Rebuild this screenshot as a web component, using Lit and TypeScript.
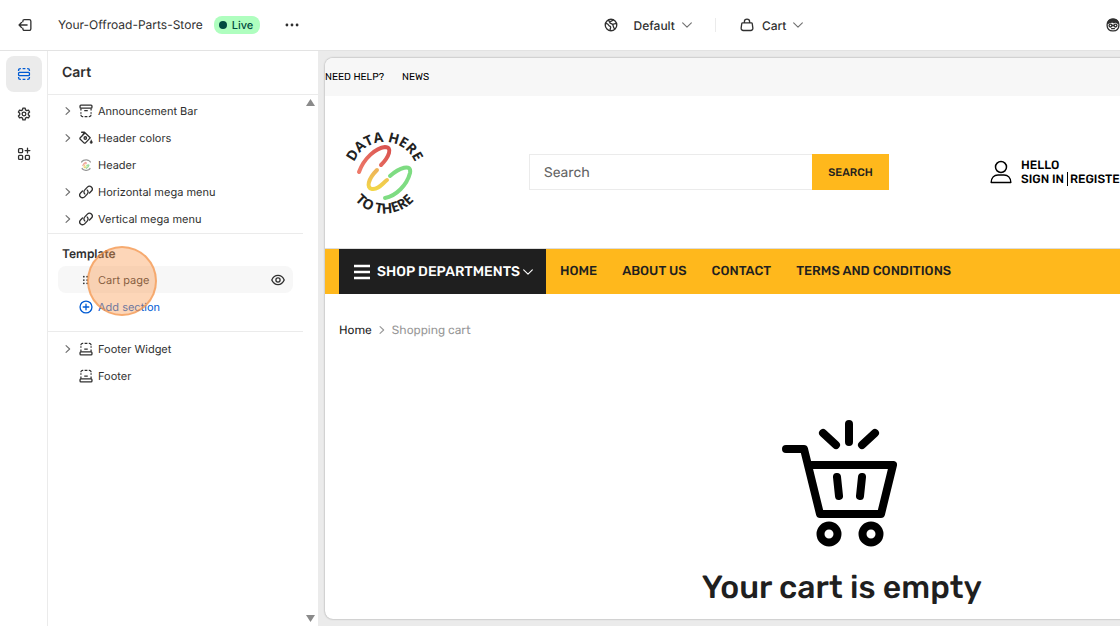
import { LitElement, html, svg, css } from "lit";
import { customElement } from "lit/decorators.js";
import { classMap } from "lit/directives/class-map.js";

const icon = (body: unknown, cls = "icon") =>
  html`<svg class=${cls} viewBox="0 0 16 16" aria-hidden="true">${body}</svg>`;

const icons = {
  exit: svg`<path d="M5.500 4.400V3.600a1.800 1.800 0 0 1 1.800-1.800h5.600a1.800 1.800 0 0 1 1.800 1.800v8.800a1.800 1.800 0 0 1-1.800 1.800H7.300a1.800 1.800 0 0 1-1.800-1.800v-.8M10.400 8H1.200M4 5.200 1.200 8 4 10.800"/>`,
  sections: svg`<g stroke-linecap="butt"><path d="M1.800 4.600V3.800A2 2 0 0 1 3.800 1.800h.6M6.400 1.800h3.200M11.600 1.800h.6a2 2 0 0 1 2 2v.8M1.800 11.400v.8a2 2 0 0 0 2 2h.6M6.400 14.200h3.200M11.600 14.200h.6a2 2 0 0 0 2-2v-.8"/></g><rect x="1.800" y="6.200" width="12.400" height="3.600" rx="1"/>`,
  gear: svg`<path d="M6.700 1.300h2.600l.4 2 1.400.8 2-.6 1.300 2.200-1.500 1.500v1.600l1.500 1.500-1.300 2.200-2-.6-1.400.8-.4 2H6.700l-.4-2-1.400-.8-2 .6-1.300-2.200 1.500-1.500V7.200L1.600 5.700l1.300-2.200 2 .6 1.400-.8z"/><circle cx="8" cy="8" r="2.100"/>`,
  apps: svg`<rect x="1.800" y="1.800" width="4.600" height="4.600" rx="1"/><rect x="1.800" y="9.600" width="4.600" height="4.600" rx="1"/><rect x="9.600" y="9.600" width="4.600" height="4.600" rx="1"/><path d="M12 1.400v5.400M9.300 4.100h5.400"/>`,
  header: svg`<rect x="1.200" y="1.200" width="13.600" height="3.600" rx="1"/><path stroke-linecap="butt" stroke-width="1.400" d="M2.200 5v2.300M13.800 5v2.300M6 7.600h4M2.200 9.300v1.900M13.800 9.300v1.900M2.200 12.400a2 2 0 0 0 2 2h.6M13.800 12.400a2 2 0 0 1-2 2h-.6M6.400 14.400h3.200"/>`,
  paint: svg`<path d="M3 1.400h3.200l6.600 6.400-5.400 5.800a1.200 1.200 0 0 1-1.700 0L1.400 9.400a1.200 1.200 0 0 1 0-1.700L6.800 2.200M6.200 1.400 3.900 5.300"/><circle cx="7.200" cy="8" r="1.400"/><path d="M14 10.400c.8 1.300 1.300 1.900 1.300 2.600a1.300 1.300 0 0 1-2.600 0c0-.7.500-1.300 1.300-2.600z" fill="currentColor" stroke-width=".5"/>`,
  link: svg`<path d="M6.600 10.200A3.200 3.200 0 0 1 6.600 5.600L9.600 2.400a3.200 3.200 0 0 1 4.600 4.500L12 9.200M9.400 5.800a3.200 3.200 0 0 1 0 4.600l-3 3.200a3.200 3.200 0 0 1-4.600-4.500L4 6.800"/>`,
  footer: svg`<path stroke-linecap="butt" stroke-width="1.400" d="M4.800 1.600h-.6a2 2 0 0 0-2 2M6.400 1.600h3.200M11.200 1.600h.6a2 2 0 0 1 2 2M2.200 4.800v1.900M13.800 4.800v1.900M6 8.200h4M2.200 8.600v2.400M13.800 8.600v2.400"/><rect x="1.200" y="11.200" width="13.600" height="3.600" rx="1"/>`,
  brand: svg`<path d="M3 4.600C5 1.400 11 1.400 13 4.600" stroke="#999" stroke-dasharray="1.500 .7"/><path d="M3.600 12c2 2.800 7 2.800 9 0" stroke="#999" stroke-dasharray="1.500 .7"/><path d="M4.400 8.600C6 5 9 4 8 6.600" stroke="#f0a8a0"/><path d="M6.600 8c-2 3 0 3.600 1.400 2" stroke="#ecd67c"/><path d="M9 8.600c3-2 3.200.4-.6 3.200" stroke="#9bdca0"/>`,
  plus: svg`<circle cx="8" cy="8" r="6.800"/><path d="M8 4.800v6.400M4.800 8h6.400"/>`,
  grip: svg`<g fill="currentColor" stroke="none"><circle cx="5.500" cy="4.200" r="1"/><circle cx="5.500" cy="8" r="1"/><circle cx="5.500" cy="11.800" r="1"/><circle cx="9.300" cy="4.200" r="1"/><circle cx="9.300" cy="8" r="1"/><circle cx="9.300" cy="11.800" r="1"/></g>`,
  eye: svg`<path d="M.9 8C2.300 4.800 4.900 2.800 8 2.800S13.700 4.800 15.100 8C13.700 11.200 11.100 13.200 8 13.200S2.300 11.200.9 8z"/><circle cx="8" cy="8" r="2.400"/>`,
  dots: svg`<g fill="currentColor" stroke="none"><circle cx="2.200" cy="8" r="1.600"/><circle cx="8" cy="8" r="1.600"/><circle cx="13.800" cy="8" r="1.600"/></g>`,
  globe: svg`<circle cx="8" cy="8" r="6.600"/><path d="M1.800 6.200c2.400.2 3.200 1 3.800 2.400.4 1 1.800.6 2 1.800.2 1-.8 1.600-.6 3.800M10.600 2.200C9.400 4 6.800 3.400 6.600 5.200c-.1 1.400 2 1 3 1.900 1.300 1.100.4 2.500 2.400 5.300M5.200 2.400l1.400 2.800M14.200 6.800c-1.600-.8-3 0-4.200.6"/>`,
  bag: svg`<path d="M5 5.600V4.300a3 3 0 0 1 6 0v1.300M3 5.600h10a1 1 0 0 1 1 .8l.7 5.200a2.400 2.400 0 0 1-2.400 2.700H3.700a2.400 2.400 0 0 1-2.400-2.700L2 6.400a1 1 0 0 1 1-.8z"/>`,
  right: svg`<path d="m5.400 3.400 4.800 4.600-4.800 4.600"/>`,
  down: svg`<path d="m2.200 5.200 5.800 5.600 5.800-5.600"/>`,
  face: svg`<path d="M2 6.200C2.400 3 4.800 1.400 8 1.400s5.600 1.600 6 4.800L10.600 4.600 9 5.400 7.200 4.400z" fill="currentColor"/><rect x="1.300" y="1.400" width="13.400" height="13.400" rx="6"/><circle cx="5.200" cy="8.600" r="1.700"/><circle cx="10.800" cy="8.600" r="1.700"/><path d="M7 8.600h2M6.400 12.200h3.200"/>`,
};

type Row = { label: string; glyph: unknown; open?: boolean };

const headerRows: Row[] = [
  { label: "Announcement Bar", glyph: icons.header, open: true },
  { label: "Header colors", glyph: icons.paint, open: true },
  { label: "Header", glyph: icons.brand },
  { label: "Horizontal mega menu", glyph: icons.link, open: true },
  { label: "Vertical mega menu", glyph: icons.link, open: true },
];

const footerRows: Row[] = [
  { label: "Footer Widget", glyph: icons.footer, open: true },
  { label: "Footer", glyph: icons.footer },
];

const shared = css`
  * {
    box-sizing: border-box;
  }
  button,
  input {
    font: inherit;
    color: inherit;
    text-rendering: inherit;
    border: 0;
    padding: 0;
    background: none;
    border-radius: 0;
  }
  a {
    color: inherit;
    text-decoration: none;
  }
  h1,
  h2,
  p,
  ul {
    margin: 0;
    padding: 0;
    list-style: none;
  }
  svg {
    display: block;
    flex: none;
    fill: none;
    stroke: currentColor;
    stroke-width: 1.5;
    stroke-linecap: round;
    stroke-linejoin: round;
  }
  .icon {
    width: 14px;
    height: 14px;
  }
  .small {
    width: 12px;
    height: 12px;
    color: #707070;
  }
`;

@customElement("editor-topbar")
class EditorTopbar extends LitElement {
  static styles = [
    shared,
    css`
      :host {
        display: grid;
        grid-template-columns: 318px 1fr auto;
        align-items: center;
        height: 51px;
        background: #fff;
        border-bottom: 1px solid #e3e3e3;
        font-size: 12px;
      }
      .left {
        display: flex;
        align-items: center;
        padding-left: 18px;
      }
      .store {
        margin: 0 11px 2px 26px;
      }
      .live {
        display: flex;
        align-items: center;
        gap: 5px;
        height: 18px;
        padding: 0 7px 0 5px;
        margin-right: 25px;
        border-radius: 8px;
        background: #affebf;
        color: #014b40;
        font-size: 11px;
        font-weight: 500;
      }
      .dot {
        width: 8px;
        height: 8px;
        border-radius: 50%;
        background: #014b40;
      }
      .center {
        display: flex;
        align-items: center;
        justify-content: center;
        padding-right: 16px;
        font-weight: 500;
      }
      .pick {
        display: flex;
        align-items: center;
        gap: 6px;
      }
      .globe {
        margin-right: 16px;
      }
      .rule {
        width: 1px;
        height: 14px;
        margin: 0 24px 0 22px;
        background: #ebebeb;
      }
      .pick .icon {
        margin-right: 2px;
      }
      .right {
        width: 14px;
      }
    `,
  ];
  render() {
    return html`
      <div class="left">
        <button aria-label="Exit">${icon(icons.exit)}</button>
        <span class="store">Your-Offroad-Parts-Store</span>
        <span class="live"><span class="dot"></span>Live</span>
        <button aria-label="More actions">${icon(icons.dots)}</button>
      </div>
      <div class="center">
        <button class="globe" aria-label="Market">${icon(icons.globe)}</button>
        <button class="pick">Default ${icon(icons.down, "small")}</button>
        <span class="rule"></span>
        <button class="pick">
          ${icon(icons.bag)}Cart ${icon(icons.down, "small")}
        </button>
      </div>
      <button class="right" aria-label="Inspector">${icon(icons.face)}</button>
    `;
  }
}

@customElement("editor-rail")
class EditorRail extends LitElement {
  static styles = [
    shared,
    css`
      :host {
        display: flex;
        flex-direction: column;
        align-items: center;
        gap: 4px;
        padding-top: 5px;
        border-right: 1px solid #ebebeb;
        background: #fff;
      }
      button {
        display: grid;
        place-items: center;
        width: 36px;
        height: 36px;
        border-radius: 8px;
      }
      .active {
        background: #ebebeb;
        color: #005bd3;
      }
    `,
  ];
  render() {
    return html`
      <button class="active" aria-label="Sections">${icon(icons.sections)}</button>
      <button aria-label="Theme settings">${icon(icons.gear)}</button>
      <button aria-label="App embeds">${icon(icons.apps)}</button>
    `;
  }
}

@customElement("editor-panel")
class EditorPanel extends LitElement {
  static styles = [
    shared,
    css`
      :host {
        display: flex;
        flex-direction: column;
        min-height: 0;
        background: #fff;
      }
      .title {
        height: 44px;
        padding-left: 14px;
        border-bottom: 1px solid #ebebeb;
        font-size: 14px;
        font-weight: 600;
        line-height: 44px;
      }
      .body {
        display: grid;
        grid-template-columns: 1fr 15px;
        flex: 1;
        min-height: 0;
      }
      .group {
        padding: 2px 10px 1px;
        border-bottom: 1px solid #ebebeb;
      }
      .template {
        padding: 10px 10px 11px;
      }
      .last {
        padding-top: 3px;
        border: 0;
      }
      .row {
        position: relative;
        display: grid;
        grid-template-columns: 12px 14px 1fr 14px;
        gap: 5px;
        align-items: center;
        width: 100%;
        height: 27px;
        padding: 0 8px 0 4px;
        border-radius: 8px;
        font-size: 11px;
        text-align: left;
      }
      .row button {
        text-align: left;
      }
      .current {
        background: #f7f7f7;
      }
      .add {
        color: #005bd3;
      }
      .heading {
        margin-bottom: 2px;
        padding-left: 4px;
        font-size: 12px;
        font-weight: 600;
        line-height: 20px;
      }
      .pointer {
        position: absolute;
        left: 29px;
        top: -20px;
        width: 70px;
        height: 70px;
        border: 2px solid rgba(243, 146, 72, 0.65);
        border-radius: 50%;
        background: rgba(251, 158, 86, 0.42);
        pointer-events: none;
        z-index: 1;
      }
      .scroll {
        display: flex;
        flex-direction: column;
        align-items: center;
        justify-content: space-between;
        padding: 4px 0;
      }
      .tri {
        width: 9px;
        height: 7px;
        background: #8a8a8a;
        clip-path: polygon(50% 0, 100% 100%, 0 100%);
      }
      .flip {
        clip-path: polygon(0 0, 100% 0, 50% 100%);
      }
    `,
  ];
  row(r: Row) {
    return html`<li>
      <button class="row">
        ${r.open ? icon(icons.right, "small") : html`<span></span>`}
        ${icon(r.glyph)}<span>${r.label}</span>
      </button>
    </li>`;
  }
  group(rows: Row[], last = false) {
    return html`<ul class=${classMap({ group: true, last })}>
      ${rows.map((r) => this.row(r))}
    </ul>`;
  }
  render() {
    return html`
      <h1 class="title">Cart</h1>
      <div class="body">
        <div>
          ${this.group(headerRows)}
          <div class="group template">
            <h2 class="heading">Template</h2>
            <div class="row current">
              <span></span>${icon(icons.grip)}
              <button>Cart page</button>
              <button aria-label="Hide section">${icon(icons.eye)}</button>
              <span class="pointer"></span>
            </div>
            <button class="row add">
              <span></span>${icon(icons.plus)}<span>Add section</span>
            </button>
          </div>
          ${this.group(footerRows, true)}
        </div>
        <div class="scroll" aria-hidden="true">
          <span class="tri"></span><span class="tri flip"></span>
        </div>
      </div>
    `;
  }
}

@customElement("store-preview")
class StorePreview extends LitElement {
  static styles = [
    shared,
    css`
      :host {
        display: block;
        overflow: hidden;
        width: 130%;
        border-radius: 8px;
        background: #fff;
        box-shadow: 0 0 2px rgba(0, 0, 0, 0.4);
        color: #1f1f1f;
        font-family: Rubik, Roboto, sans-serif;
        font-size: 13px;
        font-weight: 500;
        white-space: nowrap;
      }
      .strip {
        display: flex;
        gap: 18px;
        height: 38px;
        align-items: center;
        background: #f7f7f7;
        color: #000;
        font-size: 10px;
        font-weight: 400;
      }
      .masthead {
        display: flex;
        align-items: center;
        height: 153px;
        padding-left: 14px;
        border-bottom: 1px solid #ddd;
      }
      .logo {
        width: 90px;
        height: 90px;
        overflow: visible;
        stroke: none;
      }
      .ring {
        fill: #222;
        font-family: "Open Sans", "Noto Sans", sans-serif;
        font-size: 14px;
        font-weight: 700;
      }
      .search {
        display: flex;
        width: 360px;
        height: 36px;
        margin: 0 101px 0 100px;
      }
      .search input {
        flex: 1;
        min-width: 0;
        padding: 0 14px;
        border: 1px solid #ebebeb;
        border-right: 0;
        font-size: 14px;
        font-weight: 400;
      }
      .search input::placeholder {
        color: #666;
        opacity: 1;
      }
      .search button {
        width: 77px;
        background: #ffb81c;
        font-size: 11px;
      }
      .account {
        display: flex;
        align-items: center;
        gap: 9px;
        color: #000;
        font-size: 12px;
        line-height: 14px;
      }
      .user {
        width: 22px;
        height: 24px;
      }
      .links {
        display: flex;
        gap: 3px;
      }
      .links a + a {
        padding-left: 2px;
        border-left: 1px solid #000;
      }
      .nav {
        display: flex;
        align-items: center;
        gap: 25px;
        height: 45px;
        padding-left: 14px;
        background: #ffb81c;
      }
      .departments {
        display: flex;
        align-items: center;
        width: 207px;
        height: 45px;
        padding: 0 12px 0 14px;
        margin-right: -11px;
        background: #1f1f1f;
        color: #fff;
        font-size: 14px;
      }
      .burger {
        width: 18px;
        height: 16px;
        margin-right: 6px;
        stroke-width: 2.5;
        stroke-linecap: butt;
      }
      .departments .small {
        margin-left: auto;
        color: #fff;
      }
      .crumbs {
        display: flex;
        align-items: center;
        gap: 4px;
        padding: 27px 14px 0;
        font-size: 12px;
        font-weight: 400;
        line-height: 18px;
      }
      .crumbs .small,
      .here {
        color: #999;
      }
      .empty {
        display: flex;
        flex-direction: column;
        align-items: center;
        padding: 80px 0 10px;
      }
      .cart {
        width: 126px;
        height: 128px;
        stroke: #000;
        stroke-width: 8;
      }
      .empty h2 {
        font-size: 32px;
        font-weight: 500;
        line-height: 42px;
        padding-top: 19px;
      }
    `,
  ];
  render() {
    return html`
      <div class="strip"><a href="#help">NEED HELP?</a><a href="#news">NEWS</a></div>
      <header class="masthead">
        <a href="#home" aria-label="Data here to there">
          <svg class="logo" viewBox="0 0 90 90">
            <defs>
              <linearGradient id="warm" x1="0" y1="1" x2="1" y2="0">
                <stop offset="0" stop-color="#ee7a6a" />
                <stop offset="1" stop-color="#d9534f" />
              </linearGradient>
              <linearGradient id="sun" x1="0" y1="1" x2="0" y2="0">
                <stop offset="0" stop-color="#f2d648" />
                <stop offset="1" stop-color="#eeb45a" />
              </linearGradient>
            </defs>
            <path id="upper" d="M12.500 48A33 33 0 0 1 78.500 48" />
            <path id="lower" d="M6 47A39.500 39.500 0 0 0 85 47" />
            <text class="ring" text-anchor="middle">
              <textPath href="#upper" startOffset="50%">DATA HERE</textPath>
            </text>
            <text class="ring" text-anchor="middle">
              <textPath href="#lower" startOffset="50%">TO THERE</textPath>
            </text>
            <g stroke-width="4">
              <path stroke="url(#warm)" d="M20 45C25 31 37 21 46 20C54 20 50 30 42 38" />
              <path stroke="url(#sun)" d="M38 43C29 52 27 61 33 62C39 63 43 57 48 53" />
              <path stroke="#7edc82" d="M51 49C60 41 73 36 71 46C68 58 57 69 46 71" />
            </g>
          </svg>
        </a>
        <form class="search" role="search">
          <input type="search" placeholder="Search" aria-label="Search" />
          <button type="button">SEARCH</button>
        </form>
        <div class="account">
          <svg class="user" viewBox="0 0 22 24">
            <circle cx="11" cy="7" r="5.500" />
            <path d="M1.200 22.600c0-5 3-7.600 6.800-7.600h6c3.800 0 6.800 2.600 6.800 7.600z" />
          </svg>
          <div>
            <p>HELLO</p>
            <div class="links"><a href="#signin">SIGN IN</a><a href="#register">REGISTER</a></div>
          </div>
        </div>
      </header>
      <nav class="nav">
        <button class="departments">
          <svg class="burger" viewBox="0 0 18 16"><path d="M1 2h16M1 8h16M1 14h16" /></svg>
          SHOP DEPARTMENTS ${icon(icons.down, "small")}
        </button>
        <a href="#home">HOME</a><a href="#about">ABOUT US</a>
        <a href="#contact">CONTACT</a><a href="#terms">TERMS AND CONDITIONS</a>
      </nav>
      <div class="crumbs">
        <a href="#home">Home</a>${icon(icons.right, "small")}<span class="here">Shopping cart</span>
      </div>
      <section class="empty">
        <svg class="cart" viewBox="4 0 126 128" aria-hidden="true">
          <path d="M11 30h18l16 65h61l12-49H34M74 5v18M48 14l13 12M100 14 87 26M62 58l2 19M87 58l-2 19" />
          <circle cx="54" cy="115" r="8.500" />
          <circle cx="96" cy="115" r="8.500" />
        </svg>
        <h2>Your cart is empty</h2>
      </section>
    `;
  }
}

@customElement("app-root")
class AppRoot extends LitElement {
  static styles = [
    shared,
    css`
      :host {
        display: flex;
        flex-direction: column;
        height: 100vh;
        overflow: hidden;
        background: #fff;
        color: #303030;
        font-family: Inter, sans-serif;
        font-size: 12px;
        text-rendering: geometricPrecision;
      }
      .work {
        display: grid;
        grid-template-columns: 48px 270px 1fr;
        flex: 1;
        min-height: 0;
      }
      .stage {
        display: grid;
        overflow: hidden;
        min-width: 0;
        padding: 7px 0 7px 7px;
        background: #ebebeb;
      }
    `,
  ];
  render() {
    return html`
      <editor-topbar></editor-topbar>
      <div class="work">
        <editor-rail></editor-rail>
        <editor-panel></editor-panel>
        <main class="stage"><store-preview></store-preview></main>
      </div>
    `;
  }
}
